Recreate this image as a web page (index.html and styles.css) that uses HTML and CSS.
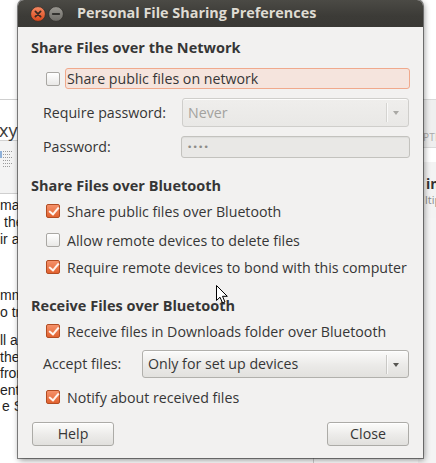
FILE: index.html
```html
<!DOCTYPE html>
<html>
<head>
<meta charset="utf-8">
<link rel="stylesheet" href="styles.css">
</head>
<body>
<div class="desktop">
  <div class="bg-left">
    <div class="bl-top"></div>
    <div class="bl-url"><span>xy</span></div>
    <div class="bl-toolbar">
      <svg class="bl-icon" width="14" height="22" viewBox="0 0 14 22">
        <rect x="0" y="4" width="2" height="7" fill="#8fb1d9"/>
        <g stroke="#9a9a9a" stroke-width="1" stroke-dasharray="1 1">
          <line x1="3" y1="4.5" x2="13" y2="4.5"/>
          <line x1="3" y1="7.5" x2="11" y2="7.5"/>
          <line x1="3" y1="10.5" x2="13" y2="10.5"/>
          <line x1="3" y1="13.5" x2="10" y2="13.5"/>
          <line x1="3" y1="16.5" x2="13" y2="16.5"/>
          <line x1="3" y1="19.5" x2="11" y2="19.5"/>
        </g>
      </svg>
    </div>
    <div class="bl-page">
      <p class="p1"><span>mag</span><span class="ind">the</span><span>ir a</span></p>
      <p class="p2"><span>mm</span><span>o tra</span></p>
      <p class="p3"><span>ll as</span><span>the</span><span>fron</span><span>enti</span><span class="ind2">e S</span></p>
    </div>
  </div>
  <div class="bg-mid"><div class="bm-line"></div></div>
  <div class="bg-right">
    <div class="br-top"></div>
    <div class="br-opt"><span>PTI</span></div>
    <div class="br-gap"></div>
    <div class="br-item"><b>in</b><span>ltip</span></div>
    <div class="br-rest"></div>
  </div>

  <div class="dialog">
    <div class="titlebar">
      <svg class="tb-btn" width="16" height="16" viewBox="0 0 16 16">
        <defs>
          <linearGradient id="gClose" x1="0" y1="0" x2="0" y2="1">
            <stop offset="0" stop-color="#f68a64"/>
            <stop offset="1" stop-color="#d9471a"/>
          </linearGradient>
        </defs>
        <circle cx="8" cy="8" r="7.4" fill="url(#gClose)" stroke="#2e2d2a" stroke-width="0.8"/>
        <path d="M5.4 5.4 L10.6 10.6 M10.6 5.4 L5.4 10.6" stroke="#3a2a22" stroke-width="1.8" stroke-linecap="round"/>
      </svg>
      <svg class="tb-btn" width="16" height="16" viewBox="0 0 16 16">
        <defs>
          <linearGradient id="gMin" x1="0" y1="0" x2="0" y2="1">
            <stop offset="0" stop-color="#9a9892"/>
            <stop offset="1" stop-color="#6d6b66"/>
          </linearGradient>
        </defs>
        <circle cx="8" cy="8" r="7.4" fill="url(#gMin)" stroke="#2e2d2a" stroke-width="0.8"/>
        <path d="M4.8 8 L11.2 8" stroke="#33322f" stroke-width="1.8" stroke-linecap="round"/>
      </svg>
      <span class="tb-title">Personal File Sharing Preferences</span>
    </div>

    <div class="body">
      <div class="heading h1">Share Files over the Network</div>

      <div class="check-row r-net">
        <span class="cb"></span>
        <span class="lbl focus">Share public files on network</span>
      </div>

      <div class="field-row r-reqpw">
        <span class="flabel w-pw">Require password:</span>
        <div class="combo disabled">
          <span class="combo-text">Never</span>
          <span class="combo-sep"></span>
          <span class="combo-arrow"></span>
        </div>
      </div>

      <div class="field-row r-pw">
        <span class="flabel w-pw">Password:</span>
        <div class="entry"><span class="dots">••••</span></div>
      </div>

      <div class="heading h2">Share Files over Bluetooth</div>

      <div class="check-row r-bt1">
        <span class="cb checked"></span>
        <span class="lbl">Share public files over Bluetooth</span>
      </div>
      <div class="check-row r-bt2">
        <span class="cb"></span>
        <span class="lbl">Allow remote devices to delete files</span>
      </div>
      <div class="check-row r-bt3">
        <span class="cb checked"></span>
        <span class="lbl">Require remote devices to bond with this computer</span>
      </div>

      <div class="heading h3">Receive Files over Bluetooth</div>

      <div class="check-row r-rx1">
        <span class="cb checked"></span>
        <span class="lbl">Receive files in Downloads folder over Bluetooth</span>
      </div>

      <div class="field-row r-accept">
        <span class="flabel w-acc">Accept files:</span>
        <div class="combo">
          <span class="combo-text">Only for set up devices</span>
          <span class="combo-sep"></span>
          <span class="combo-arrow"></span>
        </div>
      </div>

      <div class="check-row r-notify">
        <span class="cb checked"></span>
        <span class="lbl">Notify about received files</span>
      </div>

      <div class="buttons">
        <button class="btn">Help</button>
        <button class="btn">Close</button>
      </div>
    </div>
  </div>

  <svg class="cursor" width="14" height="20" viewBox="0 0 14 20">
    <path d="M0.5 0.5 L0.5 15.5 L4 12.2 L6.6 18 L9 17 L6.5 11.3 L11.3 11.3 Z" fill="#ffffff" stroke="#000000" stroke-width="1" stroke-linejoin="round"/>
  </svg>
</div>
</body>
</html>
```
FILE: styles.css
```css
* { box-sizing: border-box; }
html, body { margin: 0; padding: 0; }
body {
  width: 436px;
  height: 463px;
  overflow: hidden;
  background: #ffffff;
  font-family: "Open Sans", "Noto Sans", sans-serif;
}
.desktop {
  position: relative;
  width: 436px;
  height: 463px;
  display: flex;
}

/* ---------- background windows ---------- */
.bg-left {
  width: 18px;
  flex: none;
  display: flex;
  flex-direction: column;
  overflow: hidden;
  background: #fff;
}
.bl-top { height: 100px; flex: none; border-bottom: 1px solid #cfcfcf; background: #fff; }
.bl-url {
  position: relative;
  z-index: 1;
  height: 41px;
  flex: none;
  border-bottom: 1px solid #d2d2d2;
  font-family: "Open Sans", sans-serif;
  font-size: 18px;
  color: #3a3a3a;
  line-height: 18px;
  padding-top: 21px;
  margin-left: -1px;
  white-space: nowrap;
}
.bl-toolbar {
  height: 53px;
  flex: none;
  background: #f3f3f3;
  border-bottom: 1px solid #cfcfcf;
  padding-top: 6px;
}
.bl-icon { display: block; }
.bl-page {
  font-family: "Liberation Sans", Arial, sans-serif;
  font-size: 14px;
  color: #1f1f1f;
  white-space: nowrap;
}
.bl-page p { margin: 0; display: flex; flex-direction: column; }
.bl-page .p1 { margin-top: 3px; line-height: 17px; }
.bl-page .p2 { margin-top: 39px; line-height: 17px; }
.bl-page .p3 { margin-top: 11px; line-height: 16.5px; }
.bl-page .ind { padding-left: 4px; }
.bl-page .ind2 { padding-left: 2px; }

.bg-mid {
  flex: 1;
  background: #fff;
  position: relative;
}
.bm-line {
  position: absolute;
  left: 295px;
  bottom: 0;
  width: 1px;
  height: 8px;
  background: #cfcfcf;
}

.bg-right {
  width: 18px;
  flex: none;
  display: flex;
  flex-direction: column;
  overflow: hidden;
  white-space: nowrap;
  padding-left: 5px;
  background: #f4f4f4;
}
.br-top { height: 100px; flex: none; background: #fff; border-bottom: 1px solid #d9d9d9; }
.br-opt {
  height: 48px;
  flex: none;
  background: #efefef;
  border-bottom: 1px solid #dadada;
  font-size: 10px;
  color: #a9a9a9;
  padding-top: 30px;
  line-height: 14px;
  letter-spacing: 0.3px;
}
.br-gap { height: 14px; flex: none; background: #fff; }
.br-item {
  height: 56px;
  flex: none;
  background: #f3f3f3;
  display: flex;
  flex-direction: column;
  padding-top: 14px;
  padding-left: 3px;
}
.br-item b { font-size: 14px; color: #333; line-height: 16px; }
.br-item span { font-size: 11px; color: #8a8a8a; line-height: 13px; margin-top: 1px; margin-left: -1px; }
.br-rest { flex: 1; background: #f4f4f4; }

/* ---------- dialog ---------- */
.dialog {
  position: absolute;
  left: 18px;
  top: 0;
  width: 405px;
  height: 458px;
  z-index: 2;
  display: flex;
  flex-direction: column;
  border-radius: 6px 6px 0 0;
  box-shadow: 0 0 0 1px rgba(40,40,40,0.55), 1px 2px 6px rgba(0,0,0,0.45);
  background: #f2f1f0;
  color: #363636;
}
.titlebar {
  height: 27px;
  flex: none;
  display: flex;
  align-items: center;
  padding-left: 12px;
  padding-top: 1px;
  border-radius: 6px 6px 0 0;
  background: linear-gradient(#4b4a45, #3c3b37 60%, #3a3935);
}
.tb-btn { display: block; flex: none; }
.tb-btn + .tb-btn { margin-left: 2px; }
.tb-title {
  margin-left: 13px;
  font-weight: 700;
  font-size: 14.4px;
  color: #dfdbd2;
  line-height: 20px;
  white-space: nowrap;
  margin-top: -2px;
}

.body {
  flex: 1;
  display: flex;
  flex-direction: column;
  padding: 0 13px 0 13px;
  font-size: 14.2px;
}

.heading {
  height: 20px;
  line-height: 20px;
  font-weight: 700;
  font-size: 14.5px;
  white-space: nowrap;
}
.h1 { margin-top: 11px; }
.h2 { margin-top: 18px; }
.h3 { margin-top: 19px; }

.check-row {
  display: flex;
  align-items: center;
  height: 20px;
  margin-left: 15px;
  white-space: nowrap;
}
.r-net { height: 21px; margin-top: 10px; }
.r-bt1 { margin-top: 5px; }
.r-bt2 { margin-top: 9px; }
.r-bt3 { margin-top: 7px; }
.r-rx1 { margin-top: 5px; }
.r-notify { margin-top: 9px; }

.cb {
  width: 14px;
  height: 14px;
  flex: none;
  border: 1px solid #a9a7a3;
  border-radius: 2px;
  background: linear-gradient(#ffffff, #e9e8e6);
  position: relative;
}
.cb.checked {
  border-color: #b24c22;
  background: linear-gradient(#f5916a, #e2622f);
}
.cb.checked::after {
  content: "";
  position: absolute;
  left: 3.5px;
  top: 0px;
  width: 4px;
  height: 8px;
  border-right: 2.4px solid #fff4ee;
  border-bottom: 2.4px solid #fff4ee;
  transform: rotate(40deg);
  filter: drop-shadow(0 0 0.6px #4a2414) drop-shadow(0 0 0.4px #4a2414);
}
.lbl {
  margin-left: 5px;
  padding: 0 1px;
  border: 1px solid transparent;
  border-radius: 3px;
  height: 21px;
  line-height: 19px;
}
.lbl.focus {
  flex: 1;
  background: #f5e4dd;
  border-color: #f0a98c;
}

.field-row {
  display: flex;
  align-items: center;
  margin-left: 12px;
  white-space: nowrap;
}
.r-reqpw { margin-top: 9px; height: 29px; }
.r-pw { margin-top: 9px; height: 22px; }
.r-accept { margin-top: 9px; height: 28px; }
.flabel { flex: none; line-height: 20px; }
.w-pw { width: 139px; }
.w-acc { width: 99px; }

.combo {
  flex: 1;
  height: 100%;
  margin-right: 1px;
  display: flex;
  align-items: center;
  border: 1px solid #b1b0ac;
  border-radius: 3px;
  background: linear-gradient(#fbfbfa, #ebeae8 55%, #e2e1de);
  box-shadow: inset 0 1px 0 rgba(255,255,255,0.8);
  padding-left: 5px;
}
.combo.disabled {
  border-color: #cfcecb;
  background: linear-gradient(#efeeec, #e9e8e6);
  color: #a3a29e;
}
.combo-text { flex: 1; line-height: 20px; }
.combo-sep {
  width: 1px;
  height: 19px;
  background: #c9c8c5;
  box-shadow: 1px 0 0 rgba(255,255,255,0.7);
}
.combo.disabled .combo-sep { background: #d5d4d1; }
.combo-arrow {
  width: 0;
  height: 0;
  margin: 1px 9px 0 6px;
  border-left: 3.5px solid transparent;
  border-right: 3.5px solid transparent;
  border-top: 4px solid #575652;
}
.combo.disabled .combo-arrow { border-top-color: #a9a8a4; }

.entry {
  flex: 1;
  height: 100%;
  margin-left: -1px;
  border: 1px solid #c3c2be;
  border-radius: 3px;
  background: #e9e8e6;
  box-shadow: inset 0 1px 1px rgba(0,0,0,0.05);
  display: flex;
  align-items: center;
  padding-left: 5px;
}
.dots {
  font-family: "DejaVu Sans", sans-serif;
  font-size: 9px;
  letter-spacing: 0.2px;
  color: #8d8c88;
  line-height: 10px;
}

.buttons {
  margin-top: 15px;
  height: 24px;
  display: flex;
  justify-content: space-between;
  padding: 0 1px;
}
.btn {
  width: 82px;
  height: 24px;
  border: 1px solid #acaba7;
  border-radius: 3px;
  background: linear-gradient(#fcfcfb, #ecebe9 55%, #e1e0dd);
  box-shadow: inset 0 1px 0 #ffffff;
  font-family: "Open Sans", "Noto Sans", sans-serif;
  font-size: 14.2px;
  color: #363636;
  line-height: 20px;
  padding: 0;
}

.cursor {
  position: absolute;
  z-index: 3;
  left: 216px;
  top: 285px;
}
```
